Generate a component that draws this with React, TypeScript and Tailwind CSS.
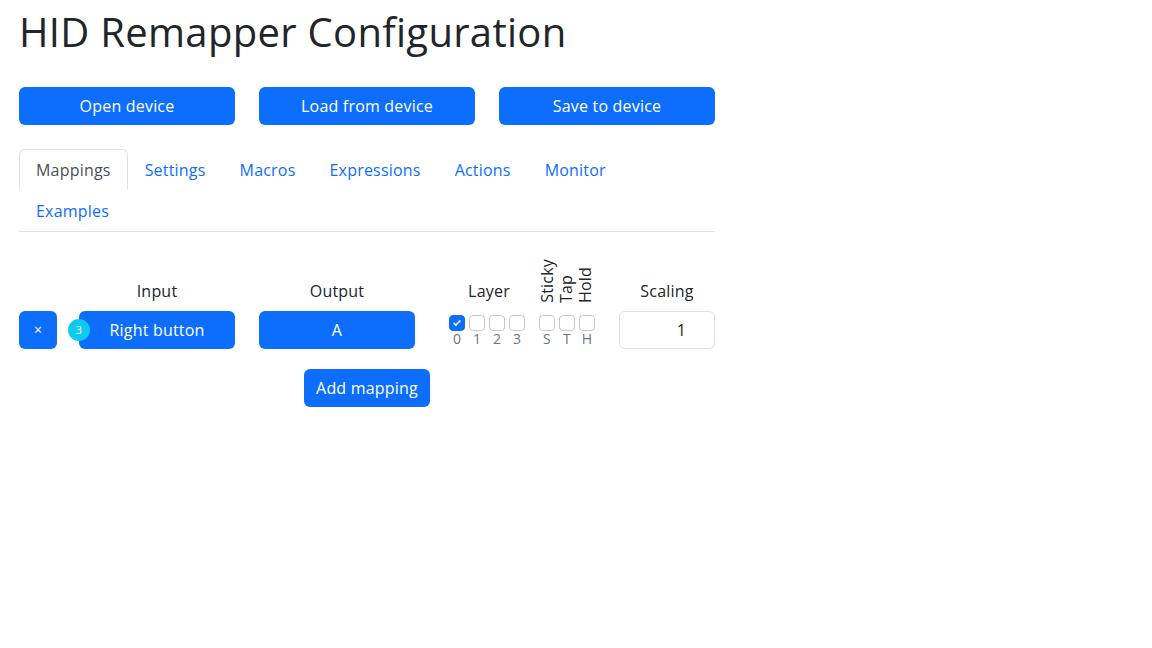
import React from "react";

const tabs = ["Mappings", "Settings", "Macros", "Expressions", "Actions", "Monitor", "Examples"];

function Check({ checked, label }: { checked?: boolean; label: string }) {
  return (
    <div className="flex w-4 flex-col items-center">
      <div
        className={
          checked
            ? "flex h-4 w-4 items-center justify-center rounded-[4px] border border-[#0d6efd] bg-[#0d6efd]"
            : "h-4 w-4 rounded-[4px] border border-[#c5c9cd] bg-white"
        }
      >
        {checked && (
          <svg viewBox="0 0 20 20" className="h-3 w-3">
            <path d="M5 10.5l3 3 7-7" fill="none" stroke="white" strokeWidth="2.6" strokeLinecap="round" strokeLinejoin="round" />
          </svg>
        )}
      </div>
      <span className="text-sm leading-4 text-[#6c757d]">{label}</span>
    </div>
  );
}

function Vert({ text }: { text: string }) {
  return (
    <div className="flex w-[19px] shrink-0 justify-center">
      <span className="rotate-180 text-base leading-5 [writing-mode:vertical-rl]">{text}</span>
    </div>
  );
}

export default function App() {
  return (
    <div className="min-h-screen bg-white font-['Open_Sans',sans-serif] tracking-[0.2px] text-[#212529]">
      <div className="w-[734px] px-[19px] pt-2">
        <h1 className="text-[40px] leading-[1.2] font-normal tracking-[0.3px]">HID Remapper Configuration</h1>

        <div className="mt-[31px] flex gap-6">
          {["Open device", "Load from device", "Save to device"].map((b) => (
            <button key={b} className="h-[38px] w-[216px] rounded-md bg-[#0d6efd] text-base text-white">
              {b}
            </button>
          ))}
        </div>

        <ul className="mt-6 flex flex-wrap border-b border-[#dee2e6]">
          {tabs.map((t, i) => (
            <li key={t}>
              <div
                className={
                  i === 0
                    ? "h-[41px] rounded-t-md border border-b-0 border-[#dee2e6] px-4 pt-2 text-base leading-6 text-[#495057]"
                    : "h-[41px] border border-transparent px-4 pt-2 text-base leading-6 text-[#0d6efd]"
                }
              >
                {t}
              </div>
            </li>
          ))}
        </ul>

        <div className="mt-[23px] flex">
          <div className="flex w-[38px] shrink-0 flex-col">
            <div className="h-14" />
            <button className="h-[38px] w-[38px] rounded-md bg-[#0d6efd] text-sm text-white">×</button>
          </div>

          <div className="ml-[22px] flex w-[156px] shrink-0 flex-col">
            <div className="flex h-12 items-end justify-center leading-6">Input</div>
            <div className="relative mt-2 flex h-[38px] items-center justify-center rounded-md bg-[#0d6efd] text-white">
              Right button
              <span className="absolute top-2 left-[-11px] flex h-[22px] w-[22px] items-center justify-center rounded-full bg-[#0dcaf0] text-[11px] tracking-normal">
                3
              </span>
            </div>
          </div>

          <div className="ml-6 flex w-[156px] shrink-0 flex-col">
            <div className="flex h-12 items-end justify-center leading-6">Output</div>
            <div className="mt-2 flex h-[38px] items-center justify-center rounded-md bg-[#0d6efd] text-white">A</div>
          </div>

          <div className="ml-[34px] flex w-[76px] shrink-0 flex-col">
            <div className="flex h-12 items-end justify-center pl-1 leading-6">Layer</div>
            <div className="mt-2 flex gap-1 pt-1">
              <Check checked label="0" />
              <Check label="1" />
              <Check label="2" />
              <Check label="3" />
            </div>
          </div>

          <div className="ml-[14px] flex w-[56px] shrink-0 flex-col">
            <div className="-ml-[2px] flex h-12 items-end">
              <Vert text="Sticky" />
              <Vert text="Tap" />
              <Vert text="Hold" />
            </div>
            <div className="mt-2 flex gap-1 pt-1">
              <Check label="S" />
              <Check label="T" />
              <Check label="H" />
            </div>
          </div>

          <div className="ml-6 flex w-[96px] shrink-0 flex-col">
            <div className="flex h-12 items-end justify-center leading-6">Scaling</div>
            <div className="mt-2 flex h-[38px] items-center justify-end rounded-md border border-[#dee2e6] pr-[28px]">1</div>
          </div>
        </div>

        <div className="mt-5 flex justify-center">
          <button className="h-[38px] rounded-md bg-[#0d6efd] px-3 text-base text-white">Add mapping</button>
        </div>
      </div>
    </div>
  );
}
